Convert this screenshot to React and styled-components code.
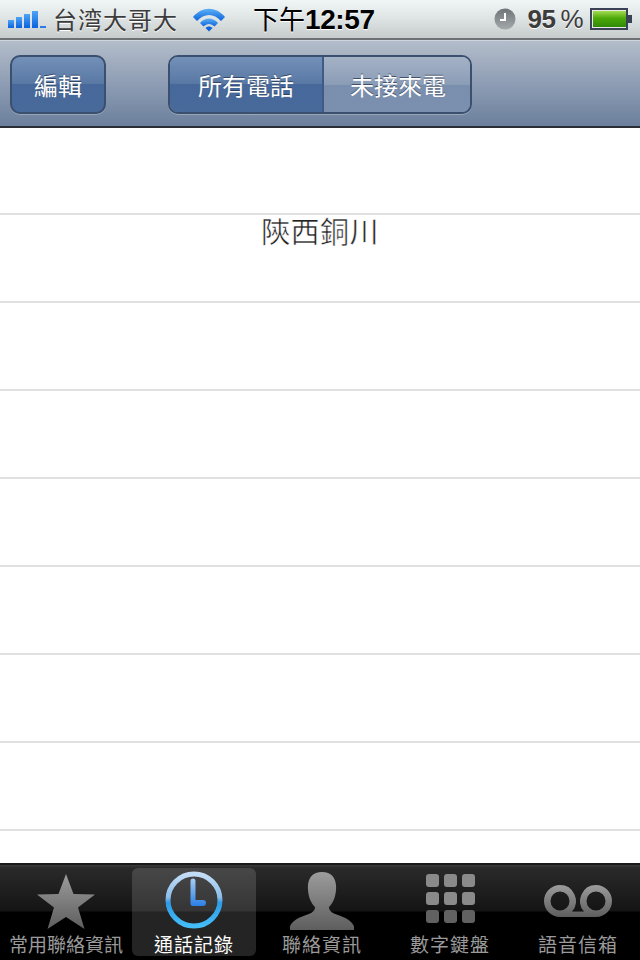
import React from "react";
import styled, { createGlobalStyle } from "styled-components";

const cjk = `"Noto Sans CJK TC", "Noto Sans CJK SC", "Liberation Sans", sans-serif`;

const GlobalStyle = createGlobalStyle`
  html, body { margin: 0; padding: 0; background: #fff; }
  #root { width: 640px; height: 960px; overflow: hidden; }
`;

const Screen = styled.div`
  width: 640px;
  height: 960px;
  display: flex;
  flex-direction: column;
  font-family: ${cjk};
  background: #fff;
`;

/* status bar */
const StatusBar = styled.div`
  height: 40px;
  box-sizing: border-box;
  flex: none;
  display: flex;
  align-items: center;
  padding: 0 8px;
  background: linear-gradient(#f0f5f6 0%, #e2e7e8 40%, #c6cbcb 100%);
  border-bottom: 2px solid #6f7275;
  position: relative;
`;
const Carrier = styled.span`
  font-size: 24px;
  line-height: 38px;
  color: #3c3c3c;
  letter-spacing: 1px;
  margin-left: 7px;
  text-shadow: 0 1px 0 #fff;
`;
const Clock = styled.span`
  font-size: 26px;
  line-height: 38px;
  color: #000;
  margin-left: 27px;
  font-weight: 400;
  text-shadow: 0 1px 0 #fff;
  b {
    font-family: "Liberation Sans", sans-serif;
    font-weight: 700;
    font-size: 28px;
    letter-spacing: -0.4px;
  }
`;
const StatusRight = styled.div`
  margin-left: auto;
  display: flex;
  align-items: center;
`;
const Percent = styled.span`
  font-family: "Liberation Sans", sans-serif;
  font-weight: 700;
  font-size: 26px;
  color: #3c3c3c;
  margin-left: 11px;
  margin-right: 7px;
  letter-spacing: -0.5px;
  text-shadow: 0 1px 0 #fff;
  i { font-style: normal; font-weight: 400; margin-left: 5px; }
`;

/* nav bar */
const NavBar = styled.div`
  height: 88px;
  box-sizing: border-box;
  flex: none;
  display: flex;
  align-items: flex-start;
  padding: 14px 0 0 10px;
  background: linear-gradient(#b3bdca 0%, #8e9db4 50%, #6b7f9c 100%);
  border-top: 1px solid #cdd5de;
  border-bottom: 2px solid #2a2d33;
  margin-top: 0;
`;
const EditButton = styled.div`
  width: 96px;
  height: 59px;
  box-sizing: border-box;
  border-radius: 10px;
  border: 2px solid #3b4f6e;
  box-shadow: 0 1px 0 rgba(255, 255, 255, 0.25);
  background: linear-gradient(#7390b8 0%, #5878a4 49%, #46689a 50%, #476a9b 100%);
  color: #fff;
  font-size: 24px;
  display: flex;
  align-items: center;
  justify-content: center;
  text-shadow: 0 -1px 0 rgba(30, 45, 70, 0.7);
`;
const Segments = styled.div`
  margin-left: 62px;
  display: flex;
  width: 304px;
  height: 59px;
  box-sizing: border-box;
  border-radius: 10px;
  border: 2px solid #3b4f6e;
  box-shadow: 0 1px 0 rgba(255, 255, 255, 0.25);
  overflow: hidden;
`;
const Segment = styled.div`
  flex: none;
  width: ${(p) => (p.$active ? "152px" : "148px")};
  display: flex;
  align-items: center;
  justify-content: center;
  color: #fff;
  font-size: 24px;
  text-shadow: 0 -1px 0 rgba(30, 45, 70, 0.7);
  background: ${(p) =>
    p.$active
      ? "linear-gradient(#7390b8 0%, #5878a4 49%, #46689a 50%, #476a9b 100%)"
      : "linear-gradient(#a4b2c6 0%, #8b9cb6 50%, #7a8ead 51%, #7b90af 100%)"};
  border-left: ${(p) => (p.$active ? "none" : "2px solid #3f5a86")};
`;

/* list */
const List = styled.div`
  flex: 1;
  min-height: 0;
  overflow: hidden;
  background: #fff;
`;
const Row = styled.div`
  height: 88px;
  box-sizing: border-box;
  border-bottom: 2px solid #e0e0e0;
  display: flex;
  justify-content: center;
  align-items: flex-start;
  &:first-child { height: 87px; }
`;
const RowLabel = styled.span`
  font-size: 29px;
  line-height: 33px;
  color: #222;
  letter-spacing: 0.5px;
  margin-top: -1px;
  -webkit-text-stroke: 0.45px #fff;
`;

/* tab bar */
const TabBar = styled.div`
  height: 97px;
  flex: none;
  box-sizing: border-box;
  display: flex;
  padding: 3px 4px 0;
  border-top: 2px solid #1a1a1a;
  background: linear-gradient(#3b3b3b 0px, #2a2a2a 3px, #141414 46px, #000 47px, #000 100%);
`;
const Tab = styled.div`
  width: ${(p) => p.$w || 124}px;
  flex: none;
  height: 88px;
  margin-right: 4px;
  box-sizing: border-box;
  border-radius: 6px;
  display: flex;
  flex-direction: column;
  align-items: center;
  background: ${(p) => (p.$active ? "rgba(255,255,255,0.14)" : "transparent")};
`;
const TabIcon = styled.svg`
  flex: none;
  display: block;
  width: 64px;
  height: 64px;
`;
const TabLabel = styled.span`
  font-size: ${(p) => p.$size || 19}px;
  line-height: 24px;
  letter-spacing: ${(p) => p.$sp || 0}px;
  white-space: nowrap;
  color: ${(p) => (p.$active ? "#fff" : "#9a9a9a")};
`;

const SignalIcon = () => (
  <svg width="38" height="18" viewBox="0 0 38 18" style={{ flex: "none" }}>
    <defs>
      <linearGradient id="sig" x1="0" y1="0" x2="0" y2="1">
        <stop offset="0" stopColor="#4ea4f5" />
        <stop offset="1" stopColor="#0a62e0" />
      </linearGradient>
    </defs>
    <rect x="0" y="10" width="6" height="8" fill="url(#sig)" />
    <rect x="8" y="7" width="6" height="11" fill="url(#sig)" />
    <rect x="16" y="4" width="6" height="14" fill="url(#sig)" />
    <rect x="24" y="1" width="6" height="17" fill="url(#sig)" />
    <rect x="32" y="16" width="6" height="2" fill="#2b7be6" />
  </svg>
);

const WifiIcon = () => (
  <svg width="34" height="26" viewBox="0 0 34 26" style={{ flex: "none", marginLeft: 14 }}>
    <defs>
      <linearGradient id="wifi" x1="0" y1="0" x2="0" y2="1">
        <stop offset="0" stopColor="#5cb0f5" />
        <stop offset="1" stopColor="#0b63dc" />
      </linearGradient>
    </defs>
    <path d="M1 11 C10 0 24 0 33 11 L29 15 C22 7 12 7 5 15 Z" fill="url(#wifi)" />
    <path d="M8 17 C13 11 21 11 26 17 L22.5 20.5 C19 17 15 17 11.500 20.500 Z" fill="url(#wifi)" />
    <path d="M13.500 22 C15.500 20 18.500 20 20.500 22 L17 25.500 Z" fill="#0b63dc" />
  </svg>
);

const AlarmIcon = () => (
  <svg width="22" height="22" viewBox="0 0 22 22" style={{ flex: "none" }}>
    <defs>
      <linearGradient id="alarm" x1="0" y1="0" x2="0" y2="1">
        <stop offset="0" stopColor="#6f7577" />
        <stop offset="1" stopColor="#a4aaac" />
      </linearGradient>
    </defs>
    <circle cx="11" cy="11" r="10.500" fill="url(#alarm)" />
    <path d="M11 5 V12 H6" fill="none" stroke="#fff" strokeWidth="2" />
  </svg>
);

const BatteryIcon = () => (
  <svg width="42" height="22" viewBox="0 0 42 22" style={{ flex: "none" }}>
    <defs>
      <linearGradient id="batt" x1="0" y1="0" x2="0" y2="1">
        <stop offset="0" stopColor="#a4dc52" />
        <stop offset="0.45" stopColor="#4da90a" />
        <stop offset="1" stopColor="#2e8a06" />
      </linearGradient>
    </defs>
    <rect x="1" y="1" width="36" height="20" fill="#e8eaea" stroke="#3b4256" strokeWidth="2" />
    <rect x="3" y="3" width="33" height="16" fill="url(#batt)" />
    <rect x="38" y="7" width="4" height="8" fill="#3b4256" />
  </svg>
);

const TabGradient = () => (
  <defs>
    <linearGradient id="tabGrey" x1="0" y1="0" x2="0" y2="1">
      <stop offset="0" stopColor="#9c9c9c" />
      <stop offset="1" stopColor="#5e5e5e" />
    </linearGradient>
    <linearGradient id="clockRing" x1="0" y1="0" x2="0" y2="1">
      <stop offset="0" stopColor="#c3ddf6" />
      <stop offset="0.45" stopColor="#8cbdea" />
      <stop offset="0.55" stopColor="#2d9be8" />
      <stop offset="1" stopColor="#44bdf8" />
    </linearGradient>
    <linearGradient id="clockHand" x1="0" y1="0" x2="0" y2="1">
      <stop offset="0" stopColor="#a8cdf2" />
      <stop offset="1" stopColor="#2a7fe6" />
    </linearGradient>
  </defs>
);

const StarIcon = () => (
  <TabIcon viewBox="0 0 64 64">
    <path
      d="M32 6 L39.500 26 L61 26.500 L44 39.500 L50.500 61 L32 49 L13.500 61 L20 39.500 L3 26.500 L24.500 26 Z"
      fill="url(#tabGrey)"
    />
  </TabIcon>
);

const ClockIcon = () => (
  <TabIcon viewBox="0 0 64 64">
    <circle cx="32" cy="32" r="26" fill="none" stroke="url(#clockRing)" strokeWidth="5" />
    <path
      d="M28.500 13 a2.500 2.500 0 0 1 5 0 V32 H41 a2.500 2.500 0 0 1 0 6 H31 a2.500 2.500 0 0 1 -2.500 -2.500 Z"
      fill="url(#clockHand)"
    />
  </TabIcon>
);

const PersonIcon = () => (
  <TabIcon viewBox="0 0 64 64">
    <path
      d="M32 4 C42 4 47 11 46 22 C45.500 29 43 35 39 39 C39 43 42 45 48 47 C56 50 63 53 65 61 L65 62 L-1 62 L-1 61 C1 53 8 50 16 47 C22 45 25 43 25 39 C21 35 18.500 29 18 22 C17 11 22 4 32 4 Z"
      fill="url(#tabGrey)"
    />
  </TabIcon>
);

const KeypadIcon = () => (
  <TabIcon viewBox="0 0 64 64">
    {[6, 24, 42].flatMap((y) =>
      [8, 26, 44].map((x) => (
        <rect key={`${x}-${y}`} x={x} y={y} width="13" height="13" rx="3" fill={y === 42 ? "#616161" : "#8a8a8a"} />
      ))
    )}
  </TabIcon>
);

const VoicemailIcon = () => (
  <TabIcon viewBox="0 0 74 64" style={{ width: 74 }}>
    <path
      d="M19 17 a16 16 0 1 0 0 32 H55 a16 16 0 1 0 0 -32 a16 16 0 0 0 -12 26.500 H31 A16 16 0 0 0 19 17 Z M19 23.500 a9.500 9.500 0 1 1 0 19 a9.500 9.500 0 0 1 0 -19 Z M55 23.500 a9.500 9.500 0 1 1 0 19 a9.500 9.500 0 0 1 0 -19 Z"
      fill="url(#tabGrey)"
      fillRule="evenodd"
    />
  </TabIcon>
);

const rows = ["", "陝西銅川", "", "", "", "", "", "", ""];

const tabs = [
  { label: "常用聯絡資訊", icon: StarIcon, size: 19 },
  { label: "通話記錄", icon: ClockIcon, active: true, sp: 1 },
  { label: "聯絡資訊", icon: PersonIcon, sp: 1 },
  { label: "數字鍵盤", icon: KeypadIcon, sp: 1 },
  { label: "語音信箱", icon: VoicemailIcon, sp: 1 },
];

export default function App() {
  return (
    <Screen>
      <GlobalStyle />
      <StatusBar>
        <SignalIcon />
        <Carrier>台湾大哥大</Carrier>
        <WifiIcon />
        <Clock>
          下午<b>12:57</b>
        </Clock>
        <StatusRight>
          <AlarmIcon />
          <Percent>
            95<i>%</i>
          </Percent>
          <BatteryIcon />
        </StatusRight>
      </StatusBar>
      <NavBar>
        <EditButton>編輯</EditButton>
        <Segments>
          <Segment $active>所有電話</Segment>
          <Segment>未接來電</Segment>
        </Segments>
      </NavBar>
      <List>
        {rows.map((text, i) => (
          <Row key={i}>{text && <RowLabel>{text}</RowLabel>}</Row>
        ))}
      </List>
      <svg width="0" height="0" style={{ position: "absolute" }}>
        <TabGradient />
      </svg>
      <TabBar>
        {tabs.map((t) => (
          <Tab key={t.label} $active={t.active}>
            <t.icon />
            <TabLabel $active={t.active} $size={t.size} $sp={t.sp}>
              {t.label}
            </TabLabel>
          </Tab>
        ))}
      </TabBar>
    </Screen>
  );
}
